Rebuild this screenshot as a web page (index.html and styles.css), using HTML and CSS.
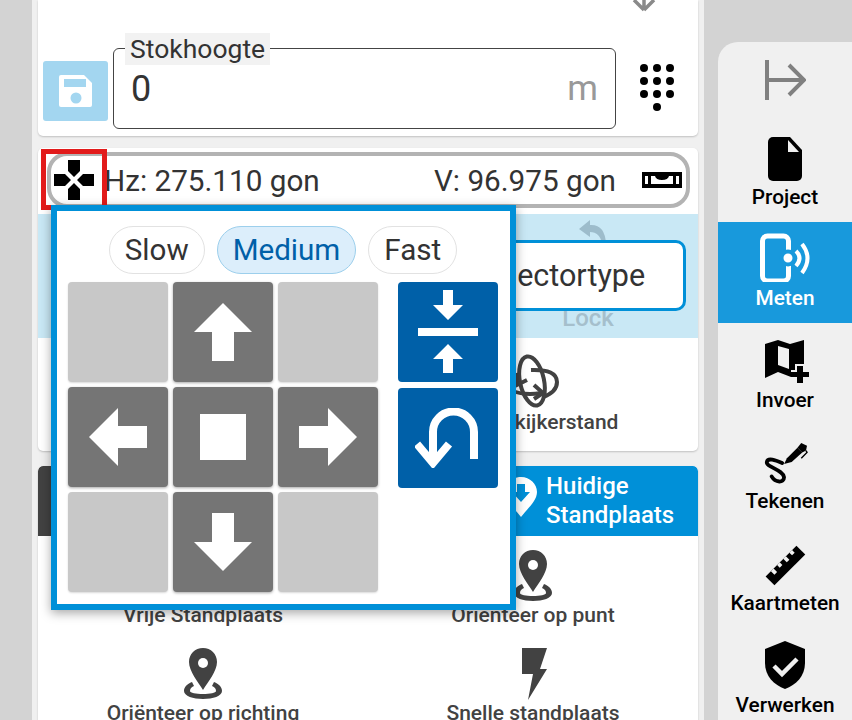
FILE: index.html
```html
<!DOCTYPE html>
<html>
<head>
    <title>Stationing</title>
    <link rel="stylesheet" href="styles.css">
</head>
<body>
    <div class="page">
        <div class="main">
            <div class="card height-card">
                <svg class="top-arrow" viewBox="0 0 24 12"><path d="M12 10 2 0M12 10 22 0M12 0v10" fill="none" stroke="#8a8a8a" stroke-width="3.5"/></svg>
                <div class="height-row">
                    <div class="save-button">
                        <svg viewBox="0 0 36 36" width="36" height="36"><path d="M3 2h23l8 8v22a2 2 0 0 1-2 2H3a2 2 0 0 1-2-2V4a2 2 0 0 1 2-2z" fill="#fff"/><rect x="6" y="6" width="22" height="8" fill="#a3d6f0"/><circle cx="18" cy="25" r="5.5" fill="#a3d6f0"/></svg>
                    </div>
                    <div class="height-field">
                        <span class="field-label">Stokhoogte</span>
                        <span class="field-value">0</span>
                        <span class="field-unit">m</span>
                    </div>
                    <svg class="keypad" viewBox="0 0 36 48" width="36" height="48" fill="#000">
                        <circle cx="5" cy="5" r="4"/><circle cx="18" cy="5" r="4"/><circle cx="31" cy="5" r="4"/>
                        <circle cx="5" cy="18" r="4"/><circle cx="18" cy="18" r="4"/><circle cx="31" cy="18" r="4"/>
                        <circle cx="5" cy="31" r="4"/><circle cx="18" cy="31" r="4"/><circle cx="31" cy="31" r="4"/>
                        <circle cx="18" cy="44" r="4"/>
                    </svg>
                </div>
            </div>

            <div class="card instrument-card">
                <div class="angle-bar">
                    <span class="angle-hz">Hz: 275.110 gon</span>
                    <span class="angle-v">V: 96.975 gon</span>
                    <svg class="level-icon" viewBox="0 0 40 16" width="40" height="16"><path d="M0 0h40v16H0z"/><path d="M3 4h3v8H3zM34 4h3v8h-3zM9 4h4q1 4 7 4t7-4h4v8H9z" fill="#fff"/></svg>
                </div>
                <div class="prism-band">
                    <div class="lock-button">
                        <svg class="lock-icon" viewBox="0 0 30 24" width="30" height="24"><path d="M13 0 2 9l11 8v-5q10 0 12 12h4Q28 4 13 5z" fill="#9dbccb"/></svg>
                        <span class="lock-label">Lock</span>
                    </div>
                    <div class="prism-select">Reflectortype</div>
                </div>
                <div class="action-row">
                    <div class="action"></div>
                    <div class="action">
                        <svg viewBox="0 0 52 56" width="52" height="56" fill="none" stroke="#424242" stroke-width="4">
                            <ellipse cx="25" cy="28" rx="12" ry="25" transform="rotate(-12 25 28)"/>
                            <path d="M24 17q26-1 26 12 0 10-14 15"/>
                            <path d="M3 37q14 6 31 3"/>
                            <path d="M27 32l9 8-9 6M9 20l1 12 10-5"/>
                        </svg>
                        <span class="action-label">Wissel kijkerstand</span>
                    </div>
                </div>
            </div>

            <div class="card station-card">
                <div class="tabs">
                    <div class="tab tab-dark"></div>
                    <div class="tab tab-blue">
                        <svg class="tab-pin" viewBox="0 0 32 40" width="32" height="40"><path d="M16 0c9 0 16 7 16 15 0 9-10 17-16 25C10 32 0 24 0 15 0 7 7 0 16 0z" fill="#fff"/><path d="M12 7h8v8h5l-9 10-9-10h5z" fill="#0090d8"/></svg>
                        <span>Huidige<br>Standplaats</span>
                    </div>
                </div>
                <div class="action-grid">
                    <div class="action"><svg class="pin" viewBox="0 0 40 52" width="40" height="52"><use href="#pin-shape"/></svg><span class="action-label">Vrije Standplaats</span></div>
                    <div class="action"><svg class="pin" viewBox="0 0 40 52" width="40" height="52"><use href="#pin-shape"/></svg><span class="action-label">Oriënteer op punt</span></div>
                    <div class="action"><svg class="pin" viewBox="0 0 40 52" width="40" height="52"><use href="#pin-shape"/></svg><span class="action-label">Oriënteer op richting</span></div>
                    <div class="action"><svg viewBox="0 0 28 52" width="28" height="52"><path d="M3 0h25l-7 21h7L9 52l5-26H3z" fill="#424242"/></svg><span class="action-label">Snelle standplaats</span></div>
                </div>
            </div>
        </div>

        <div class="sidebar">
            <div class="side-toggle">
                <svg viewBox="0 0 42 42" width="42" height="42" fill="none" stroke="#808080" stroke-width="4"><path d="M3 1v40M3 21h36M25 6l15 15-15 15"/></svg>
            </div>
            <div class="side-item">
                <svg viewBox="0 0 34 44" width="34" height="44"><path d="M5 0h17l12 13v26a5 5 0 0 1-5 5H5a5 5 0 0 1-5-5V5a5 5 0 0 1 5-5z"/><path d="M20 3l11 12H20z" fill="#f0f0f0"/></svg>
                <span>Project</span>
            </div>
            <div class="side-item side-active">
                <svg viewBox="0 0 52 50" width="52" height="50" fill="none" stroke="#fff"><rect x="3.5" y="4" width="26" height="45" rx="5" stroke-width="5"/><circle cx="29" cy="26" r="6.5" fill="#fff" stroke="#1899dc" stroke-width="4"/><path d="M37 19q7 7 0 15M43 12q11 14 0 29" stroke-width="4"/></svg>
                <span>Meten</span>
            </div>
            <div class="side-item">
                <svg viewBox="-4 0 48 44" width="48" height="44"><path d="M0 4 13 0l12 4 14-4v24h-9v6h-4v7l-13-5-13 6z"/><path d="M13 6l11 3v20l-11-4z" fill="#f0f0f0"/><path d="M32 26h6v6h6v5h-6v6h-6v-6h-6v-5h6z"/></svg>
                <span>Invoer</span>
            </div>
            <div class="side-item">
                <svg viewBox="0 0 48 46" width="48" height="44"><path d="M23 24l3-6L37 7l5 5-11 10z"/><path d="M37 7l4-5 6 3-1 5-4 2z"/><path d="M46 10l1 2-6 6" fill="none" stroke="#000" stroke-width="1.5"/><path d="M21 23C14 20 6 17 5 22c-1 5 17 8 18 16 0 6-9 6-13-1" fill="none" stroke="#000" stroke-width="4" stroke-linecap="round"/></svg>
                <span>Tekenen</span>
            </div>
            <div class="side-item">
                <svg viewBox="0 0 46 50" width="46" height="44"><path d="M1 38 36 3l10 10-35 35z"/><path d="M7 32l3-3 4 4-3 3zM14 25l3-3 3 3-3 3zM21 18l3-3 4 4-3 3zM28 11l3-3 3 3-3 3z" fill="#f0f0f0"/></svg>
                <span>Kaartmeten</span>
            </div>
            <div class="side-item">
                <svg viewBox="0 0 40 48" width="40" height="48"><path d="M20 0 40 8v14c0 13-9 22-20 26C9 44 0 35 0 22V8z"/><path d="M9 25l8 8 15-15" fill="none" stroke="#f0f0f0" stroke-width="4.5"/></svg>
                <span>Verwerken</span>
            </div>
        </div>
    </div>

    <svg class="symbols"><defs><g id="pin-shape">
        <path d="M20 0c8 0 14 6 14 14 0 9-9 20-14 28C15 34 6 23 6 14 6 6 12 0 20 0z" fill="#424242"/>
        <circle cx="20" cy="15" r="5" fill="#fff"/>
        <path d="M9 34c-5 2-8 5-8 9 0 5 9 8 19 8s19-3 19-8c0-4-3-7-8-9l-2 4c3 1 4 3 4 5 0 2-6 3-13 3S7 45 7 43c0-2 1-4 4-5z" fill="#424242"/>
    </g></defs></svg>

    <div class="stick-toggle">
        <svg viewBox="0 0 40 40" width="40" height="40"><path d="M14 0h12v11l-6 6-6-6zM14 40h12V29l-6-6-6 6zM0 14v12h11l6-6-6-6zM40 14v12H29l-6-6 6-6z"/></svg>
    </div>

    <div class="stick-panel">
        <div class="speed-row">
            <span class="speed-chip">Slow</span>
            <span class="speed-chip speed-active">Medium</span>
            <span class="speed-chip">Fast</span>
        </div>
        <div class="stick-body">
            <div class="pad">
                <div class="pad-key pad-off"></div>
                <div class="pad-key"><svg viewBox="0 0 60 60" width="60" height="60"><path d="M30 1 59 30H41v29H19V30H1z"/></svg></div>
                <div class="pad-key pad-off"></div>
                <div class="pad-key"><svg viewBox="0 0 60 60" width="60" height="60"><path d="M1 30 30 1v18h29v22H30v18z"/></svg></div>
                <div class="pad-key"><svg viewBox="0 0 46 46" width="46" height="46"><path d="M0 0h46v46H0z"/></svg></div>
                <div class="pad-key"><svg viewBox="0 0 60 60" width="60" height="60"><path d="M59 30 30 1v18H1v22h29v18z"/></svg></div>
                <div class="pad-key pad-off"></div>
                <div class="pad-key"><svg viewBox="0 0 60 60" width="60" height="60"><path d="M30 59 1 30h18V1h22v29h18z"/></svg></div>
                <div class="pad-key pad-off"></div>
            </div>
            <div class="focus-col">
                <div class="focus-key"><svg viewBox="0 0 60 84" width="60" height="84"><path d="M25 0h10v15h10L30 30 15 15h10zM0 38h60v8H0zM30 54l15 15H35v14H25V69H15z"/></svg></div>
                <div class="focus-key"><svg viewBox="0 0 66 60" width="66" height="60" fill="none" stroke="#fff" stroke-width="8"><path d="M59 51V24a20.5 20.5 0 0 0-41 0v31"/><path d="M2 36l16 19 16-19"/></svg></div>
            </div>
        </div>
    </div>
</body>
</html>
```

FILE: styles.css
```css
* {
    box-sizing: border-box;
}

body {
    margin: 0;
    width: 852px;
    height: 720px;
    overflow: hidden;
    background-color: #d3d3d3;
    font-family: Roboto, Arial, sans-serif;
    color: #333333;
    position: relative;
}

.page {
    display: flex;
    height: 720px;
    padding-left: 32px;
}

.main {
    width: 672px;
    height: 720px;
    padding: 0 6px;
    background-color: #f0f0f0;
    overflow: hidden;
    flex-shrink: 0;
}

.card {
    background-color: #ffffff;
    border-radius: 5px;
    box-shadow: 0 1px 2px rgba(0, 0, 0, 0.2);
    position: relative;
    overflow: hidden;
}

.height-card {
    height: 136px;
    border-radius: 0 0 5px 5px;
    padding: 48px 0 0 5px;
}

.top-arrow {
    position: absolute;
    top: 0;
    left: 594px;
    width: 24px;
    height: 12px;
}

.height-row {
    display: flex;
    align-items: center;
}

.save-button {
    width: 65px;
    height: 60px;
    background-color: #a3d6f0;
    border-radius: 3px;
    display: flex;
    align-items: center;
    justify-content: center;
    margin: 5px 5px 0 0;
}

.height-field {
    width: 503px;
    height: 81px;
    border: 1px solid #444444;
    border-radius: 6px;
    display: flex;
    justify-content: space-between;
    align-items: center;
    padding: 0 17px 0 17px;
    position: relative;
}

.field-label {
    position: absolute;
    left: 11px;
    top: -16px;
    padding: 0 5px;
    height: 32px;
    line-height: 32px;
    font-size: 26.5px;
    background-color: #f2f2f2;
}

.field-value {
    font-size: 36px;
}

.field-unit {
    font-size: 35px;
    color: #999999;
}

.keypad {
    margin: -3px 0 0 23px;
}

.instrument-card {
    height: 303px;
    margin-top: 12px;
    padding-top: 4px;
}

.angle-bar {
    height: 56px;
    margin: 0 8px 0 9px;
    border: 4px solid #b3b3b3;
    border-radius: 20px;
    display: flex;
    align-items: center;
    font-size: 29.7px;
    padding: 0 4px 0 53px;
}

.angle-hz {
    flex: 1;
}

.level-icon {
    margin-left: 26px;
}

.prism-band {
    height: 124px;
    margin-top: 6px;
    background-color: #c9e8f5;
    position: relative;
}

.lock-button {
    position: absolute;
    left: 525px;
    top: 6px;
    width: 50px;
    height: 112px;
    display: flex;
    flex-direction: column;
    align-items: center;
    justify-content: space-between;
}

.lock-icon {
    margin-left: 8px;
}

.lock-label {
    font-size: 24px;
    font-weight: 500;
    color: #a5bfcc;
}

.prism-select {
    position: absolute;
    left: 380px;
    top: 26px;
    width: 268px;
    height: 71px;
    line-height: 66px;
    text-align: center;
    padding-left: 6px;
    border: 3px solid #0090d8;
    border-radius: 10px;
    background-color: #ffffff;
    font-size: 30.5px;
}

.action-row {
    display: grid;
    grid-template-columns: 330px 330px;
    padding-top: 15px;
}

.action {
    display: flex;
    flex-direction: column;
    align-items: center;
    height: 98px;
}

.action-label {
    font-size: 21px;
    font-weight: 500;
    color: #424242;
    white-space: nowrap;
    margin-top: 1px;
}

.station-card {
    height: 300px;
    margin-top: 15px;
}

.tabs {
    display: flex;
    height: 70px;
}

.tab {
    flex: 0 0 330px;
    border-radius: 5px 5px 0 0;
}

.tab-dark {
    background-color: #424242;
}

.tab-blue {
    background-color: #0090d8;
    color: #ffffff;
    font-size: 24px;
    font-weight: 500;
    line-height: 29px;
    display: flex;
    align-items: center;
    gap: 9px;
    padding-left: 137px;
}

.tab-pin {
    margin-bottom: 8px;
}

.action-grid {
    display: grid;
    grid-template-columns: 330px 330px;
    padding-top: 14px;
}

.symbols {
    position: absolute;
    width: 0;
    height: 0;
}

.sidebar {
    width: 134px;
    height: 678px;
    margin: 42px 0 0 14px;
    background-color: #f0f0f0;
    border-radius: 20px 0 0 0;
    flex-shrink: 0;
    display: flex;
    flex-direction: column;
}

.side-toggle {
    height: 78px;
    padding-bottom: 2px;
    display: flex;
    align-items: center;
    justify-content: center;
    flex-shrink: 0;
}

.side-item {
    height: 101.6px;
    display: flex;
    flex-direction: column;
    align-items: center;
    justify-content: flex-end;
    padding-bottom: 13px;
    font-size: 20.8px;
    font-weight: 500;
    color: #000000;
    flex-shrink: 0;
    gap: 4px;
}

.side-active {
    background-color: #1899dc;
    color: #ffffff;
}

.stick-toggle {
    position: absolute;
    left: 41px;
    top: 149px;
    width: 66px;
    height: 61px;
    border: 5px solid #e21b1b;
    display: flex;
    align-items: center;
    justify-content: center;
}

.stick-panel {
    position: absolute;
    left: 51px;
    top: 205px;
    width: 465px;
    height: 405px;
    background-color: #ffffff;
    border: 6px solid #0090d8;
    box-shadow: 0 3px 10px rgba(0, 0, 0, 0.35);
    padding: 15px 11px 0;
}

.speed-row {
    display: flex;
    justify-content: center;
    gap: 12px;
    width: 430px;
    margin-bottom: 8px;
}

.speed-chip {
    height: 48px;
    line-height: 46px;
    padding: 0 15px;
    font-size: 29.6px;
    border: 1px solid #e2e2e2;
    border-radius: 24px;
}

.speed-active {
    background-color: #dceefb;
    border-color: #9ccfec;
    color: #0060a8;
}

.stick-body {
    display: flex;
    gap: 20px;
}

.pad {
    display: grid;
    grid-template-columns: repeat(3, 100px);
    grid-template-rows: repeat(3, 100px);
    gap: 5px;
}

.pad-key {
    background-color: #757575;
    border-radius: 4px;
    box-shadow: 0 1px 3px rgba(0, 0, 0, 0.35);
    display: flex;
    align-items: center;
    justify-content: center;
    fill: #ffffff;
}

.pad-off {
    background-color: #c8c8c8;
    box-shadow: 0 1px 2px rgba(0, 0, 0, 0.15);
}

.focus-col {
    display: flex;
    flex-direction: column;
    gap: 6px;
}

.focus-key {
    width: 100px;
    height: 100px;
    background-color: #0060a8;
    border-radius: 4px;
    display: flex;
    align-items: center;
    justify-content: center;
    fill: #ffffff;
}
```
